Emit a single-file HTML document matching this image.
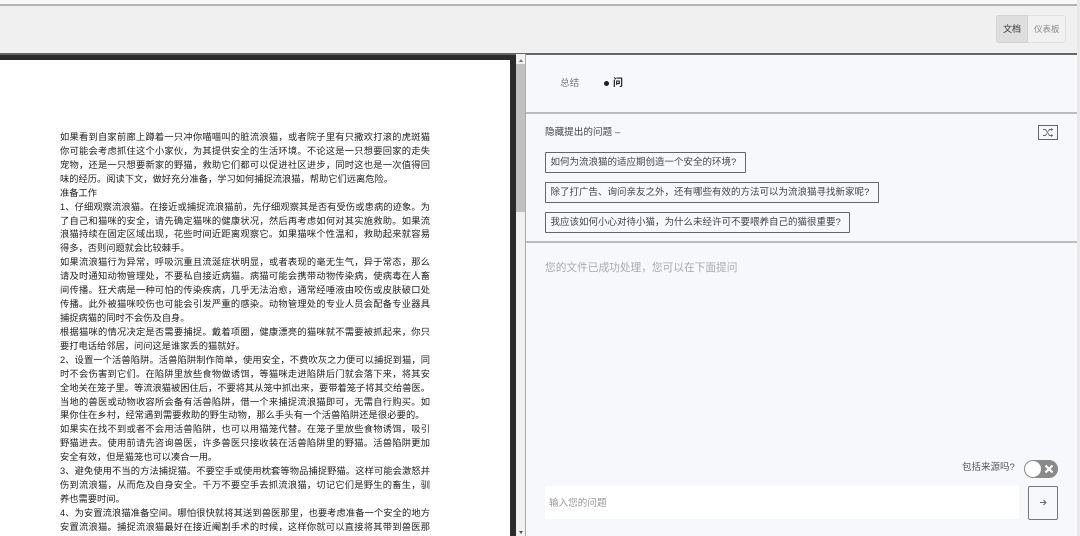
<!DOCTYPE html>
<html lang="zh"><head><meta charset="utf-8"><style>
html,body{margin:0;padding:0;width:1080px;height:536px;overflow:hidden}
body{background:#f5f5f5;font-family:"Liberation Sans","Noto Sans CJK SC",sans-serif}
#wrap{position:relative;width:1080px;height:536px;overflow:hidden}
.a{position:absolute}
.t{position:absolute;white-space:nowrap;line-height:14px;filter:blur(.25px)}
#clip{position:absolute;left:0;top:60px;width:510px;height:476px;overflow:hidden;background:#fff}
#doc{position:absolute;left:60px;top:71px;width:370px;font-size:9.25px;line-height:13.93px;color:#222;filter:blur(.3px)}
#doc div{height:13.93px;white-space:nowrap;overflow:hidden}
#doc .j{text-align:justify;text-align-last:justify;white-space:normal}
.q{position:absolute;left:545px;box-sizing:border-box;border:1px solid #666;border-radius:1px;height:20.5px;font-size:9.5px;line-height:20px;padding-left:4.5px;color:#444;white-space:nowrap}
</style></head><body><div id="wrap">
<div class="a" style="left:0;top:0;width:1080px;height:4px;background:#f8f8f8"></div>
<div class="a" style="left:0;top:4px;width:1077px;height:2px;background:#b4b4b4"></div>
<div class="a" style="left:0;top:6px;width:1077px;height:47px;background:#f0f0f0"></div>
<div class="a" style="left:0;top:53px;width:1077px;height:2px;background:#666"></div>
<div class="a" style="left:1077px;top:0;width:3px;height:536px;background:#e9e9e9"></div>

<div class="a" style="left:996px;top:15px;width:70px;height:28px;box-sizing:border-box;border:1px solid #e2e2e2;border-radius:3px;background:#f1f1f1"></div>
<div class="a" style="left:996px;top:15px;width:32px;height:28px;box-sizing:border-box;border:1px solid #d4d4d4;border-radius:3px 0 0 3px;background:#dedede"></div>
<div class="t" style="left:1003px;top:22px;font-size:9px;color:#333">文档</div>
<div class="t" style="left:1034px;top:22px;font-size:8.5px;color:#888">仪表板</div>

<div class="a" style="left:0;top:55px;width:516px;height:481px;background:#2b2b2b"></div>
<div id="clip"><div id="doc">
<div class="j">如果看到自家前廊上蹲着一只冲你喵喵叫的脏流浪猫，或者院子里有只撒欢打滚的虎斑猫</div>
<div class="j">你可能会考虑抓住这个小家伙，为其提供安全的生活环境。不论这是一只想要回家的走失</div>
<div class="j">宠物，还是一只想要新家的野猫，救助它们都可以促进社区进步，同时这也是一次值得回</div>
<div>味的经历。阅读下文，做好充分准备，学习如何捕捉流浪猫，帮助它们远离危险。</div>
<div>准备工作</div>
<div class="j">1、仔细观察流浪猫。在接近或捕捉流浪猫前，先仔细观察其是否有受伤或患病的迹象。为</div>
<div class="j">了自己和猫咪的安全，请先确定猫咪的健康状况，然后再考虑如何对其实施救助。如果流</div>
<div class="j">浪猫持续在固定区域出现，花些时间近距离观察它。如果猫咪个性温和，救助起来就容易</div>
<div>得多，否则问题就会比较棘手。</div>
<div class="j">如果流浪猫行为异常，呼吸沉重且流涎症状明显，或者表现的毫无生气，异于常态，那么</div>
<div class="j">请及时通知动物管理处，不要私自接近病猫。病猫可能会携带动物传染病，使病毒在人畜</div>
<div class="j">间传播。狂犬病是一种可怕的传染疾病，几乎无法治愈，通常经唾液由咬伤或皮肤破口处</div>
<div class="j">传播。此外被猫咪咬伤也可能会引发严重的感染。动物管理处的专业人员会配备专业器具</div>
<div>捕捉病猫的同时不会伤及自身。</div>
<div class="j">根据猫咪的情况决定是否需要捕捉。戴着项圈，健康漂亮的猫咪就不需要被抓起来，你只</div>
<div>要打电话给邻居，问问这是谁家丢的猫就好。</div>
<div class="j">2、设置一个活兽陷阱。活兽陷阱制作简单，使用安全，不费吹灰之力便可以捕捉到猫，同</div>
<div class="j">时不会伤害到它们。在陷阱里放些食物做诱饵，等猫咪走进陷阱后门就会落下来，将其安</div>
<div class="j" style="letter-spacing:-.02px">全地关在笼子里。等流浪猫被困住后，不要将其从笼中抓出来，要带着笼子将其交给兽医。</div>
<div class="j">当地的兽医或动物收容所会备有活兽陷阱，借一个来捕捉流浪猫即可，无需自行购买。如</div>
<div style="letter-spacing:.1px">果你住在乡村，经常遇到需要救助的野生动物，那么手头有一个活兽陷阱还是很必要的。</div>
<div class="j">如果实在找不到或者不会用活兽陷阱，也可以用猫笼代替。在笼子里放些食物诱饵，吸引</div>
<div class="j">野猫进去。使用前请先咨询兽医，许多兽医只接收装在活兽陷阱里的野猫。活兽陷阱更加</div>
<div>安全有效，但是猫笼也可以凑合一用。</div>
<div class="j">3、避免使用不当的方法捕捉猫。不要空手或使用枕套等物品捕捉野猫。这样可能会激怒并</div>
<div class="j">伤到流浪猫，从而危及自身安全。千万不要空手去抓流浪猫，切记它们是野生的畜生，驯</div>
<div>养也需要时间。</div>
<div class="j">4、为安置流浪猫准备空间。哪怕很快就将其送到兽医那里，也要考虑准备一个安全的地方</div>
<div class="j">安置流浪猫。捕捉流浪猫最好在接近阉割手术的时候，这样你就可以直接将其带到兽医那</div>
<div class="j">里。如果需要把猫带回家，应在一个安静的房间内布置好所需要的猫砂和食盆等物品之类</div>
</div></div>
<div class="a" style="left:516px;top:54px;width:10px;height:482px;background:#f1f1f1;border-right:1px solid #aaa;box-sizing:border-box"></div>
<div class="a" style="left:516px;top:64px;width:9px;height:148px;background:#c1c1c1"></div>
<div class="a" style="left:519px;top:59px;width:0;height:0;border:2px solid transparent;border-bottom:3px solid #777;border-top:0"></div>
<div class="a" style="left:519px;top:531px;width:0;height:0;border:2px solid transparent;border-top:3px solid #555;border-bottom:0"></div>

<div class="a" style="left:526px;top:55px;width:551px;height:481px;background:#f7f8fc"></div>
<div class="t" style="left:560px;top:76.5px;font-size:9.6px;color:#777">总结</div>
<div class="a" style="left:603.5px;top:81px;width:5px;height:5px;border-radius:50%;background:#222"></div>
<div class="t" style="left:613px;top:76.5px;font-size:10px;font-weight:bold;color:#222">问</div>
<div class="a" style="left:526px;top:112px;width:551px;height:1.5px;background:#bcbcbc"></div>

<div class="t" style="left:545px;top:125.5px;font-size:9.6px;color:#444">隐藏提出的问题 –</div>
<div class="a" style="left:1037.5px;top:125px;width:20.5px;height:15px;box-sizing:border-box;border:1px solid #666"></div>
<svg class="a" style="left:1042px;top:128px" width="12" height="9" viewBox="0 0 12 9" fill="none" stroke="#666" stroke-width=".9"><path d="M1 1.5h2.5l4 6H10M1 7.5h2.5l1.3-2M6.2 3.4l1.3-1.9H10M9 .5l1.5 1-1.5 1M9 6.5l1.5 1-1.5 1"/></svg>

<div class="q" style="top:152px;width:200.5px">如何为流浪猫的适应期创造一个安全的环境?</div>
<div class="q" style="top:182px;width:334px">除了打广告、询问亲友之外，还有哪些有效的方法可以为流浪猫寻找新家呢?</div>
<div class="q" style="top:212px;width:305px">我应该如何小心对待小猫，为什么未经许可不要喂养自己的猫很重要?</div>
<div class="a" style="left:526px;top:241px;width:551px;height:1.5px;background:#bcbcbc"></div>
<div class="t" style="left:545px;top:260.5px;font-size:10.7px;color:#aaa">您的文件已成功处理，您可以在下面提问</div>

<div class="t" style="left:962px;top:461px;font-size:9.5px;color:#555">包括来源吗?</div>
<div class="a" style="left:1024px;top:460px;width:34px;height:18px;border-radius:9px;background:#8a8a8a"></div>
<div class="a" style="left:1025px;top:461px;width:16px;height:16px;border-radius:50%;background:#fff"></div>
<svg class="a" style="left:1044px;top:464px" width="10" height="10" viewBox="0 0 10 10"><path d="M1.5 1.5l7 7M8.5 1.5l-7 7" stroke="#fff" stroke-width="2.2"/></svg>

<div class="a" style="left:545px;top:486px;width:474px;height:33px;background:#fff"></div>
<div class="t" style="left:549px;top:496.5px;font-size:9.6px;color:#999">输入您的问题</div>
<div class="a" style="left:1028px;top:486px;width:29.5px;height:33.5px;box-sizing:border-box;border:1px solid #777;border-radius:2px"></div>
<svg class="a" style="left:1038px;top:498px" width="10" height="9" viewBox="0 0 10 9" fill="none" stroke="#666"><path d="M2 4.5h6M5.5 2l2.5 2.5L5.5 7"/></svg>
</div></body></html>
